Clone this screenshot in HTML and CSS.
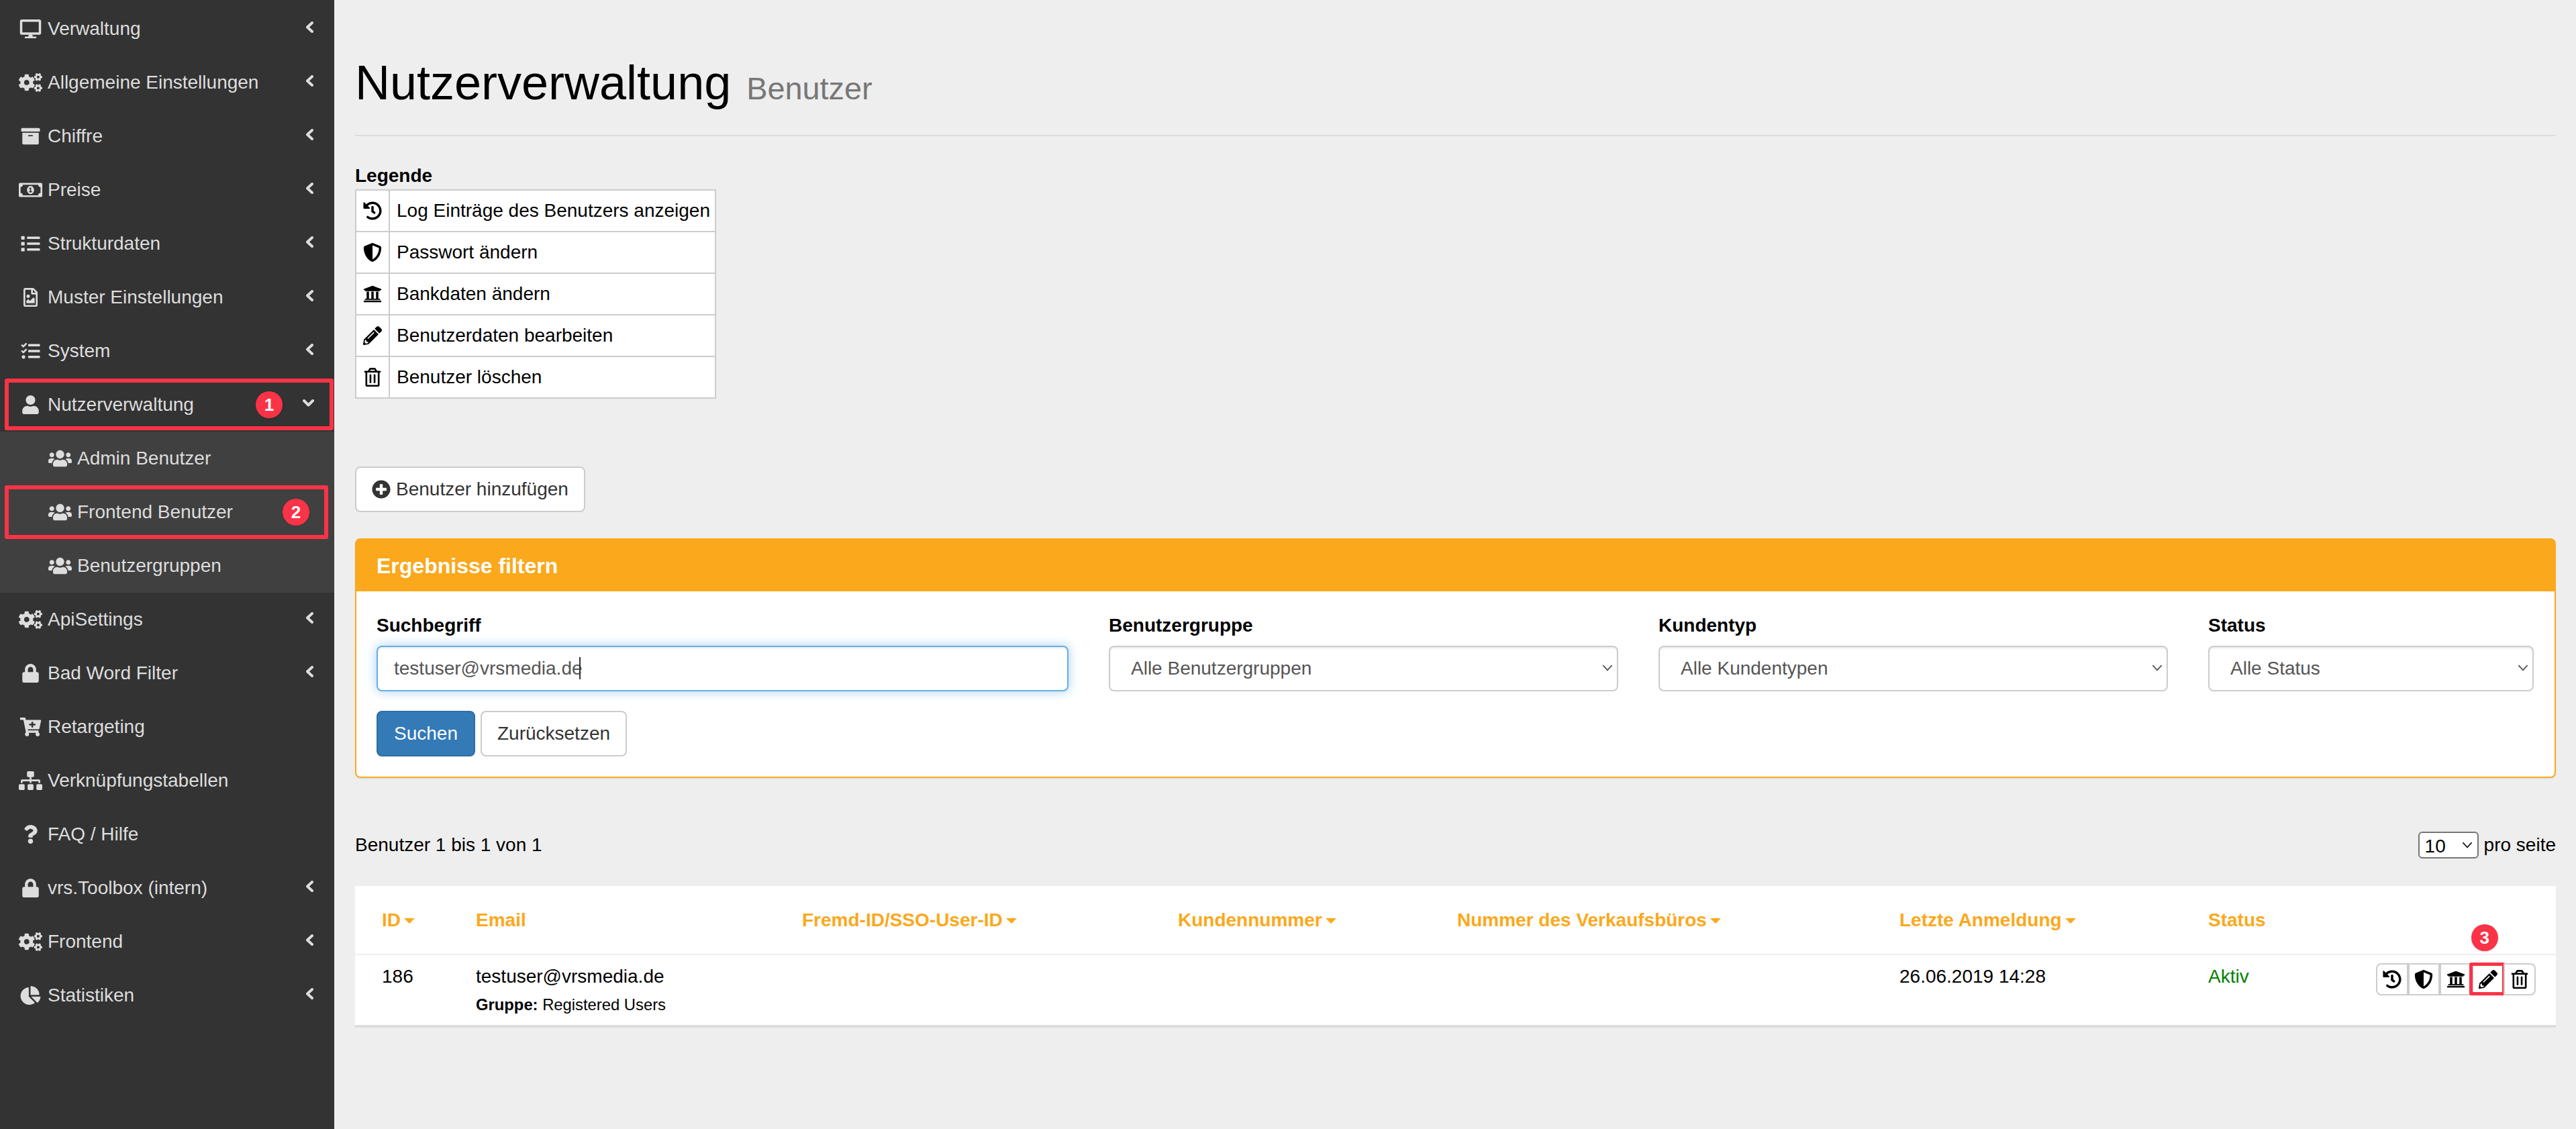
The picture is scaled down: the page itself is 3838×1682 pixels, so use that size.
FILE: index.html
```html
<!DOCTYPE html>
<html lang="de">
  <head>
    <meta charset="UTF-8" />
    <title>Nutzerverwaltung</title>
    <link rel="stylesheet" href="styles.css">
  </head>
  <body>
    <svg class="sprite" aria-hidden="true">
      <defs>
        <path id="desktop" d="M528 0H48C21.5 0 0 21.5 0 48v320c0 26.5 21.5 48 48 48h192l-16 48h-72c-13.3 0-24 10.7-24 24s10.7 24 24 24h272c13.3 0 24-10.7 24-24s-10.7-24-24-24h-72l-16-48h192c26.5 0 48-21.5 48-48V48c0-26.5-21.5-48-48-48zm-16 352H64V64h448v288z"/>
        <path id="cogs" d="M512.1 191l-8.2 14.3c-3 5.3-9.4 7.5-15.1 5.4-11.8-4.4-22.6-10.7-32.1-18.6-4.6-3.8-5.8-10.5-2.8-15.7l8.2-14.3c-6.9-8-12.3-17.3-15.9-27.4h-16.5c-6 0-11.2-4.3-12.2-10.3-2-12-2.1-24.6 0-37.1 1-6 6.2-10.4 12.2-10.4h16.5c3.6-10.1 9-19.4 15.9-27.4l-8.2-14.3c-3-5.2-1.9-11.9 2.8-15.7 9.5-7.9 20.4-14.2 32.1-18.6 5.7-2.1 12.1.1 15.1 5.4l8.2 14.3c10.5-1.9 21.2-1.9 31.7 0L552 6.3c3-5.3 9.4-7.5 15.1-5.4 11.8 4.4 22.6 10.7 32.1 18.6 4.6 3.8 5.8 10.5 2.8 15.7l-8.2 14.3c6.9 8 12.3 17.3 15.9 27.4h16.5c6 0 11.2 4.3 12.2 10.3 2 12 2.1 24.6 0 37.1-1 6-6.2 10.4-12.2 10.4h-16.5c-3.6 10.1-9 19.4-15.9 27.4l8.2 14.3c3 5.2 1.9 11.9-2.8 15.7-9.5 7.9-20.4 14.2-32.1 18.6-5.7 2.1-12.1-.1-15.1-5.4l-8.2-14.3c-10.4 1.9-21.2 1.9-31.7 0zm-10.5-58.8c38.5 29.6 82.4-14.3 52.8-52.8-38.5-29.7-82.4 14.3-52.8 52.8zM386.3 286.1l33.7 16.8c10.1 5.8 14.5 18.1 10.5 29.1-8.9 24.2-26.4 46.4-42.6 65.8-7.4 8.9-20.2 11.1-30.3 5.3l-29.1-16.8c-16 13.7-34.6 24.6-54.9 31.7v33.6c0 11.6-8.3 21.6-19.7 23.6-24.6 4.2-50.4 4.4-75.9 0-11.5-2-20-11.9-20-23.6V418c-20.3-7.2-38.9-18-54.9-31.7L74 403c-10 5.8-22.9 3.6-30.3-5.3-16.2-19.4-33.3-41.6-42.2-65.7-4-10.9.4-23.2 10.5-29.1l33.3-16.8c-3.9-20.9-3.9-42.4 0-63.4L12 205.8c-10.1-5.8-14.6-18.1-10.5-29 8.9-24.2 26-46.4 42.2-65.8 7.4-8.9 20.2-11.1 30.3-5.3l29.1 16.8c16-13.7 34.6-24.6 54.9-31.7V57.1c0-11.5 8.2-21.5 19.6-23.5 24.6-4.2 50.5-4.4 76-.1 11.5 2 20 11.9 20 23.6v33.6c20.3 7.2 38.9 18 54.9 31.7l29.1-16.8c10-5.8 22.9-3.6 30.3 5.3 16.2 19.4 33.2 41.6 42.1 65.8 4 10.9.1 23.2-10 29.1l-33.7 16.8c3.9 21 3.9 42.5 0 63.5zm-117.6 21.1c59.2-77-28.7-164.9-105.7-105.7-59.2 77 28.7 164.9 105.7 105.7zm243.4 182.7l-8.2 14.3c-3 5.3-9.4 7.5-15.1 5.4-11.8-4.4-22.6-10.7-32.1-18.6-4.6-3.8-5.8-10.5-2.8-15.7l8.2-14.3c-6.9-8-12.3-17.3-15.9-27.4h-16.5c-6 0-11.2-4.3-12.2-10.3-2-12-2.1-24.6 0-37.1 1-6 6.2-10.4 12.2-10.4h16.5c3.6-10.1 9-19.4 15.9-27.4l-8.2-14.3c-3-5.2-1.9-11.9 2.8-15.7 9.5-7.9 20.4-14.2 32.1-18.6 5.7-2.1 12.1.1 15.1 5.4l8.2 14.3c10.5-1.9 21.2-1.9 31.7 0l8.2-14.3c3-5.3 9.4-7.5 15.1-5.4 11.8 4.4 22.6 10.7 32.1 18.6 4.6 3.8 5.8 10.5 2.8 15.7l-8.2 14.3c6.9 8 12.3 17.3 15.9 27.4h16.5c6 0 11.2 4.3 12.2 10.3 2 12 2.1 24.6 0 37.1-1 6-6.2 10.4-12.2 10.4h-16.5c-3.6 10.1-9 19.4-15.9 27.4l8.2 14.3c3 5.2 1.9 11.9-2.8 15.7-9.5 7.9-20.4 14.2-32.1 18.6-5.7 2.1-12.1-.1-15.1-5.4l-8.2-14.3c-10.4 1.9-21.2 1.9-31.7 0zM501.6 431c38.5 29.6 82.4-14.3 52.8-52.8-38.5-29.6-82.4 14.3-52.8 52.8z"/>
        <path id="archive" d="M32 448c0 17.7 14.3 32 32 32h384c17.7 0 32-14.3 32-32V160H32v288zm160-212c0-6.6 5.4-12 12-12h104c6.6 0 12 5.4 12 12v8c0 6.6-5.4 12-12 12H204c-6.6 0-12-5.4-12-12v-8zM480 32H32C14.3 32 0 46.3 0 64v48c0 8.8 7.2 16 16 16h480c8.8 0 16-7.2 16-16V64c0-17.7-14.3-32-32-32z"/>
        <path id="money" d="M320 144c-53.02 0-96 50.14-96 112 0 61.85 42.98 112 96 112 53 0 96-50.13 96-112 0-61.86-42.98-112-96-112zm40 168c0 4.42-3.58 8-8 8h-64c-4.42 0-8-3.58-8-8v-16c0-4.42 3.58-8 8-8h16v-55.44l-.47.31a7.992 7.992 0 0 1-11.09-2.22l-8.88-13.31a7.992 7.992 0 0 1 2.22-11.09l15.33-10.22a23.99 23.99 0 0 1 13.31-4.03H328c4.42 0 8 3.58 8 8V288h16c4.42 0 8 3.58 8 8v16zM608 64H32C14.33 64 0 78.33 0 96v320c0 17.67 14.33 32 32 32h576c17.67 0 32-14.33 32-32V96c0-17.67-14.33-32-32-32zm-16 272c-35.35 0-64 28.65-64 64H112c0-35.35-28.65-64-64-64V176c35.35 0 64-28.65 64-64h416c0 35.35 28.65 64 64 64v160z"/>
        <path id="list" d="M80 368H16a16 16 0 0 0-16 16v64a16 16 0 0 0 16 16h64a16 16 0 0 0 16-16v-64a16 16 0 0 0-16-16zm0-320H16A16 16 0 0 0 0 64v64a16 16 0 0 0 16 16h64a16 16 0 0 0 16-16V64a16 16 0 0 0-16-16zm0 160H16a16 16 0 0 0-16 16v64a16 16 0 0 0 16 16h64a16 16 0 0 0 16-16v-64a16 16 0 0 0-16-16zm416 176H176a16 16 0 0 0-16 16v32a16 16 0 0 0 16 16h320a16 16 0 0 0 16-16v-32a16 16 0 0 0-16-16zm0-320H176a16 16 0 0 0-16 16v32a16 16 0 0 0 16 16h320a16 16 0 0 0 16-16V80a16 16 0 0 0-16-16zm0 160H176a16 16 0 0 0-16 16v32a16 16 0 0 0 16 16h320a16 16 0 0 0 16-16v-32a16 16 0 0 0-16-16z"/>
        <path id="file-image" d="M369.9 97.9L286 14C277 5 264.8-.1 252.1-.1H48C21.5 0 0 21.5 0 48v416c0 26.5 21.5 48 48 48h288c26.5 0 48-21.5 48-48V131.9c0-12.7-5.1-25-14.1-34zM332.1 128H256V51.9l76.1 76.1zM48 464V48h160v104c0 13.3 10.7 24 24 24h104v288H48zm32-48h224V288l-23.5-23.5c-4.7-4.7-12.3-4.7-17 0L176 352l-39.5-39.5c-4.7-4.7-12.3-4.7-17 0L80 352v64zm48-240c-26.5 0-48 21.5-48 48s21.5 48 48 48 48-21.5 48-48-21.5-48-48-48z"/>
        <path id="tasks" d="M139.61 35.5a12 12 0 0 0-17 0L58.93 98.81l-22.7-22.12a12 12 0 0 0-17 0L3.53 92.41a12 12 0 0 0 0 17l47.59 47.4a12.78 12.78 0 0 0 17.61 0l15.59-15.62L156.52 69a12.09 12.09 0 0 0 .09-17zm0 159.19a12 12 0 0 0-17 0l-63.68 63.72-22.7-22.1a12 12 0 0 0-17 0L3.53 252a12 12 0 0 0 0 17L51 316.5a12.77 12.77 0 0 0 17.6 0l15.7-15.69 72.2-72.22a12 12 0 0 0 .09-16.9zM64 368c-26.49 0-48.59 21.5-48.59 48S37.53 464 64 464a48 48 0 0 0 0-96zm432 16H208a16 16 0 0 0-16 16v32a16 16 0 0 0 16 16h288a16 16 0 0 0 16-16v-32a16 16 0 0 0-16-16zm0-320H208a16 16 0 0 0-16 16v32a16 16 0 0 0 16 16h288a16 16 0 0 0 16-16V80a16 16 0 0 0-16-16zm0 160H208a16 16 0 0 0-16 16v32a16 16 0 0 0 16 16h288a16 16 0 0 0 16-16v-32a16 16 0 0 0-16-16z"/>
        <path id="user" d="M224 256c70.7 0 128-57.3 128-128S294.7 0 224 0 96 57.3 96 128s57.3 128 128 128zm89.6 32h-16.7c-22.2 10.2-46.9 16-72.9 16s-50.6-5.8-72.9-16h-16.7C60.2 288 0 348.2 0 422.4V464c0 26.5 21.5 48 48 48h352c26.5 0 48-21.5 48-48v-41.6c0-74.2-60.2-134.4-134.4-134.4z"/>
        <path id="users" d="M96 224c35.3 0 64-28.7 64-64s-28.7-64-64-64-64 28.7-64 64 28.7 64 64 64zm448 0c35.3 0 64-28.7 64-64s-28.7-64-64-64-64 28.7-64 64 28.7 64 64 64zm32 32h-64c-17.6 0-33.5 7.1-45.1 18.6 40.3 22.1 68.9 62 75.1 109.4h66c17.7 0 32-14.3 32-32v-32c0-35.3-28.7-64-64-64zm-256 0c61.9 0 112-50.1 112-112S381.9 32 320 32 208 82.1 208 144s50.1 112 112 112zm76.8 32h-8.3c-20.8 10-43.9 16-68.5 16s-47.6-6-68.5-16h-8.3C179.6 288 128 339.6 128 403.2V432c0 26.5 21.5 48 48 48h288c26.5 0 48-21.5 48-48v-28.8c0-63.6-51.6-115.2-115.2-115.2zm-223.7-13.4C161.5 263.1 145.6 256 128 256H64c-35.3 0-64 28.7-64 64v32c0 17.7 14.3 32 32 32h65.9c6.3-47.4 34.9-87.3 75.2-109.4z"/>
        <path id="lock" d="M400 224h-24v-72C376 68.2 307.8 0 224 0S72 68.2 72 152v72H48c-26.5 0-48 21.5-48 48v192c0 26.5 21.5 48 48 48h352c26.5 0 48-21.5 48-48V272c0-26.5-21.5-48-48-48zm-104 0H152v-72c0-39.7 32.3-72 72-72s72 32.3 72 72v72z"/>
        <path id="cart-plus" d="M504.717 320H211.572l6.545 32h268.418c15.401 0 26.816 14.301 23.403 29.319l-5.517 24.276C523.112 414.668 536 433.828 536 456c0 31.202-25.519 56.444-56.824 55.994-29.823-.429-54.35-24.631-55.155-54.447-.44-16.287 6.085-31.049 16.803-41.548H231.176C241.553 426.165 248 440.326 248 456c0 31.813-26.528 57.431-58.67 55.938-28.54-1.325-51.751-24.385-53.251-52.917-1.158-22.034 10.436-41.455 28.051-51.586L93.883 64H24C10.745 64 0 53.255 0 40V24C0 10.745 10.745 0 24 0h102.529c11.401 0 21.228 8.021 23.513 19.19L159.208 64H551.99c15.401 0 26.816 14.301 23.403 29.319l-47.273 208C525.637 312.246 515.923 320 504.717 320zM408 168h-48v-40c0-8.837-7.163-16-16-16h-16c-8.837 0-16 7.163-16 16v40h-48c-8.837 0-16 7.163-16 16v16c0 8.837 7.163 16 16 16h48v40c0 8.837 7.163 16 16 16h16c8.837 0 16-7.163 16-16v-40h48c8.837 0 16-7.163 16-16v-16c0-8.837-7.163-16-16-16z"/>
        <path id="sitemap" d="M128 352H32c-17.67 0-32 14.33-32 32v96c0 17.67 14.33 32 32 32h96c17.67 0 32-14.33 32-32v-96c0-17.67-14.33-32-32-32zm-24-80h192v48h48v-48h192v48h48v-57.59c0-21.17-17.23-38.41-38.41-38.41H344v-64h40c17.67 0 32-14.33 32-32V32c0-17.67-14.33-32-32-32H256c-17.67 0-32 14.33-32 32v96c0 17.67 14.33 32 32 32h40v64H94.41C73.23 224 56 241.23 56 262.41V320h48v-48zm264 80h-96c-17.67 0-32 14.33-32 32v96c0 17.67 14.33 32 32 32h96c17.67 0 32-14.33 32-32v-96c0-17.67-14.33-32-32-32zm240 0h-96c-17.67 0-32 14.33-32 32v96c0 17.67 14.33 32 32 32h96c17.67 0 32-14.33 32-32v-96c0-17.67-14.33-32-32-32z"/>
        <path id="question" d="M202.021 0C122.202 0 70.503 32.703 29.914 91.026c-7.363 10.58-5.093 25.086 5.178 32.874l43.138 32.709c10.373 7.865 25.132 6.026 33.253-4.148 25.049-31.381 43.63-49.449 82.757-49.449 30.764 0 68.816 19.799 68.816 49.631 0 22.552-18.617 34.134-48.993 51.164-35.423 19.86-82.299 44.576-82.299 106.405V320c0 13.255 10.745 24 24 24h72.471c13.255 0 24-10.745 24-24v-5.773c0-42.86 125.268-44.645 125.268-160.627C377.504 66.256 286.902 0 202.021 0zM192 373.459c-38.196 0-69.271 31.075-69.271 69.271 0 38.195 31.075 69.27 69.271 69.27s69.271-31.075 69.271-69.271-31.075-69.27-69.271-69.27z"/>
        <path id="chart-pie" d="M527.79 288H290.5l158.03 158.03c6.04 6.04 15.98 6.53 22.19.68 38.7-36.46 65.32-85.61 73.13-140.86 1.34-9.46-6.51-17.85-16.06-17.85zm-15.83-64.8C503.72 103.74 408.26 8.28 288.8.04 279.68-.59 272 7.1 272 16.24V240h223.77c9.14 0 16.82-7.68 16.19-16.8zM224 288V50.71c0-9.55-8.39-17.4-17.84-16.06C86.99 51.49-4.1 155.6.14 280.37 4.5 408.51 114.83 513.59 243.03 511.98c50.4-.63 96.97-16.87 135.26-44.03 7.9-5.6 8.42-17.23 1.57-24.08L224 288z"/>
        <path id="history" d="M504 255.531c.253 136.64-111.18 248.372-247.82 248.468-59.015.042-113.223-20.53-155.822-54.911-11.077-8.94-11.905-25.541-1.839-35.607l11.267-11.267c8.609-8.609 22.353-9.551 31.891-1.984C173.062 425.135 212.781 440 256 440c101.705 0 184-82.311 184-184 0-101.705-82.311-184-184-184-48.814 0-93.149 18.969-126.068 49.932l50.754 50.754c10.08 10.08 2.941 27.314-11.313 27.314H24c-8.837 0-16-7.163-16-16V38.627c0-14.254 17.234-21.393 27.314-11.314l49.372 49.372C129.209 34.136 189.552 8 256 8c136.81 0 247.747 110.78 248 247.531zm-180.912 78.784l9.823-12.63c8.138-10.463 6.253-25.542-4.21-33.679L288 256.349V152c0-13.255-10.745-24-24-24h-16c-13.255 0-24 10.745-24 24v135.651l65.409 50.874c10.463 8.137 25.541 6.253 33.679-4.21z"/>
        <path id="shield" d="M466.5 83.7l-192-80a48.15 48.15 0 0 0-36.9 0l-192 80C27.7 91.1 16 108.6 16 128c0 198.5 114.5 335.7 221.5 380.3 11.8 4.9 25.1 4.9 36.9 0C360.1 472.6 496 349.3 496 128c0-19.4-11.7-36.9-29.5-44.3zM256.1 446.3l-.1-381 175.9 73.3c-3.3 151.4-82.1 261.1-175.8 307.7z"/>
        <path id="bank" d="M496 128v16a8 8 0 0 1-8 8h-24v12c0 6.627-5.373 12-12 12H60c-6.627 0-12-5.373-12-12v-12H24a8 8 0 0 1-8-8v-16a8 8 0 0 1 4.941-7.392l232-88a7.996 7.996 0 0 1 6.118 0l232 88A8 8 0 0 1 496 128zm-24 304H40c-13.255 0-24 10.745-24 24v16a8 8 0 0 0 8 8h464a8 8 0 0 0 8-8v-16c0-13.255-10.745-24-24-24zM96 192v192H60c-6.627 0-12 5.373-12 12v20h416v-20c0-6.627-5.373-12-12-12h-36V192h-64v192h-64V192h-64v192h-64V192H96z"/>
        <path id="pencil" d="M497.9 142.1l-46.1 46.1c-4.7 4.7-12.3 4.7-17 0l-111-111c-4.7-4.7-4.7-12.3 0-17l46.1-46.1c18.7-18.7 49.1-18.7 67.9 0l60.1 60.1c18.8 18.7 18.8 49.1 0 67.9zM284.2 99.8L21.6 362.4.4 483.9c-2.9 16.4 11.4 30.6 27.8 27.8l121.5-21.3 262.6-262.6c4.7-4.7 4.7-12.3 0-17l-111-111c-4.8-4.7-12.4-4.7-17.1 0zM124.1 339.9c-5.5-5.5-5.5-14.3 0-19.8l154-154c5.5-5.5 14.3-5.5 19.8 0s5.5 14.3 0 19.8l-154 154c-5.5 5.5-14.3 5.5-19.8 0zM88 424h48v36.3l-64.5 11.3-31.1-31.1L51.7 376H88v48z"/>
        <path id="trash" d="M268 416h24a12 12 0 0 0 12-12V188a12 12 0 0 0-12-12h-24a12 12 0 0 0-12 12v216a12 12 0 0 0 12 12zM432 80h-82.41l-34-56.7A48 48 0 0 0 274.41 0H173.59a48 48 0 0 0-41.16 23.3L98.41 80H16A16 16 0 0 0 0 96v16a16 16 0 0 0 16 16h16v336a48 48 0 0 0 48 48h288a48 48 0 0 0 48-48V128h16a16 16 0 0 0 16-16V96a16 16 0 0 0-16-16zM171.84 50.91A6 6 0 0 1 177 48h94a6 6 0 0 1 5.15 2.91L293.61 80H154.39zM368 464H80V128h288zm-212-48h24a12 12 0 0 0 12-12V188a12 12 0 0 0-12-12h-24a12 12 0 0 0-12 12v216a12 12 0 0 0 12 12z"/>
        <path id="plus-circle" d="M256 8C119 8 8 119 8 256s111 248 248 248 248-111 248-248S393 8 256 8zm144 276c0 6.6-5.4 12-12 12h-92v92c0 6.6-5.4 12-12 12h-56c-6.6 0-12-5.4-12-12v-92h-92c-6.6 0-12-5.4-12-12v-56c0-6.6 5.4-12 12-12h92v-92c0-6.6 5.4-12 12-12h56c6.6 0 12 5.4 12 12v92h92c6.6 0 12 5.4 12 12v56z"/>
        <polyline id="chev-left" points="9,2 2,8.5 9,15" fill="none" stroke="currentColor" stroke-width="4" stroke-linecap="round" stroke-linejoin="round"/>
        <polyline id="chev-down" points="2,2 8.5,8.5 15,2" fill="none" stroke="currentColor" stroke-width="4" stroke-linecap="round" stroke-linejoin="round"/>
        <polyline id="chev-thin" points="1,1 7,7.5 13,1" fill="none" stroke="currentColor" stroke-width="1.6"/>
      </defs>
    </svg>

    <aside class="sidebar">
      <a class="nav-item"><svg class="nav-ico" viewBox="0 0 576 512"><use href="#desktop"/></svg><span>Verwaltung</span><svg class="chev" viewBox="0 0 11 17"><use href="#chev-left"/></svg></a>
      <a class="nav-item"><svg class="nav-ico" viewBox="0 0 640 512"><use href="#cogs"/></svg><span>Allgemeine Einstellungen</span><svg class="chev" viewBox="0 0 11 17"><use href="#chev-left"/></svg></a>
      <a class="nav-item"><svg class="nav-ico" viewBox="0 0 512 512"><use href="#archive"/></svg><span>Chiffre</span><svg class="chev" viewBox="0 0 11 17"><use href="#chev-left"/></svg></a>
      <a class="nav-item"><svg class="nav-ico" viewBox="0 0 640 512"><use href="#money"/></svg><span>Preise</span><svg class="chev" viewBox="0 0 11 17"><use href="#chev-left"/></svg></a>
      <a class="nav-item"><svg class="nav-ico" viewBox="0 0 512 512"><use href="#list"/></svg><span>Strukturdaten</span><svg class="chev" viewBox="0 0 11 17"><use href="#chev-left"/></svg></a>
      <a class="nav-item"><svg class="nav-ico" viewBox="0 0 384 512"><use href="#file-image"/></svg><span>Muster Einstellungen</span><svg class="chev" viewBox="0 0 11 17"><use href="#chev-left"/></svg></a>
      <a class="nav-item"><svg class="nav-ico" viewBox="0 0 512 512"><use href="#tasks"/></svg><span>System</span><svg class="chev" viewBox="0 0 11 17"><use href="#chev-left"/></svg></a>
      <a class="nav-item"><svg class="nav-ico" viewBox="0 0 448 512"><use href="#user"/></svg><span>Nutzerverwaltung</span><svg class="chev chev-open" viewBox="0 0 17 11"><use href="#chev-down"/></svg>
        <span class="mark mark-nutzer"></span><span class="badge badge-nutzer">1</span>
      </a>
      <div class="subnav">
        <a class="nav-item sub-item"><svg class="nav-ico" viewBox="0 0 640 512"><use href="#users"/></svg><span>Admin Benutzer</span></a>
        <a class="nav-item sub-item"><svg class="nav-ico" viewBox="0 0 640 512"><use href="#users"/></svg><span>Frontend Benutzer</span>
          <span class="mark mark-frontend"></span><span class="badge badge-frontend">2</span>
        </a>
        <a class="nav-item sub-item"><svg class="nav-ico" viewBox="0 0 640 512"><use href="#users"/></svg><span>Benutzergruppen</span></a>
      </div>
      <a class="nav-item"><svg class="nav-ico" viewBox="0 0 640 512"><use href="#cogs"/></svg><span>ApiSettings</span><svg class="chev" viewBox="0 0 11 17"><use href="#chev-left"/></svg></a>
      <a class="nav-item"><svg class="nav-ico" viewBox="0 0 448 512"><use href="#lock"/></svg><span>Bad Word Filter</span><svg class="chev" viewBox="0 0 11 17"><use href="#chev-left"/></svg></a>
      <a class="nav-item"><svg class="nav-ico" viewBox="0 0 576 512"><use href="#cart-plus"/></svg><span>Retargeting</span></a>
      <a class="nav-item"><svg class="nav-ico" viewBox="0 0 640 512"><use href="#sitemap"/></svg><span>Verknüpfungstabellen</span></a>
      <a class="nav-item"><svg class="nav-ico" viewBox="0 0 384 512"><use href="#question"/></svg><span>FAQ / Hilfe</span></a>
      <a class="nav-item"><svg class="nav-ico" viewBox="0 0 448 512"><use href="#lock"/></svg><span>vrs.Toolbox (intern)</span><svg class="chev" viewBox="0 0 11 17"><use href="#chev-left"/></svg></a>
      <a class="nav-item"><svg class="nav-ico" viewBox="0 0 640 512"><use href="#cogs"/></svg><span>Frontend</span><svg class="chev" viewBox="0 0 11 17"><use href="#chev-left"/></svg></a>
      <a class="nav-item"><svg class="nav-ico" viewBox="0 0 544 512"><use href="#chart-pie"/></svg><span>Statistiken</span><svg class="chev" viewBox="0 0 11 17"><use href="#chev-left"/></svg></a>
    </aside>

    <main class="content">
      <h1 class="page-title">Nutzerverwaltung <small>Benutzer</small></h1>

      <div class="legend-title">Legende</div>
      <table class="legend">
        <tr><td class="legend-ico"><svg viewBox="0 0 512 512"><use href="#history"/></svg></td><td>Log Einträge des Benutzers anzeigen</td></tr>
        <tr><td class="legend-ico"><svg viewBox="0 0 512 512"><use href="#shield"/></svg></td><td>Passwort ändern</td></tr>
        <tr><td class="legend-ico"><svg viewBox="0 0 512 512"><use href="#bank"/></svg></td><td>Bankdaten ändern</td></tr>
        <tr><td class="legend-ico"><svg viewBox="0 0 512 512"><use href="#pencil"/></svg></td><td>Benutzerdaten bearbeiten</td></tr>
        <tr><td class="legend-ico"><svg viewBox="0 0 448 512"><use href="#trash"/></svg></td><td>Benutzer löschen</td></tr>
      </table>

      <button class="btn btn-add"><svg viewBox="0 0 512 512"><use href="#plus-circle"/></svg>Benutzer hinzufügen</button>

      <section class="panel">
        <div class="panel-head">Ergebnisse filtern</div>
        <div class="panel-body">
          <div class="filters">
            <div>
              <label class="field-label">Suchbegriff</label>
              <div class="field">
                <input class="input input-focus" type="text" value="testuser@vrsmedia.de" />
                <span class="caret"></span>
              </div>
            </div>
            <div>
              <label class="field-label">Benutzergruppe</label>
              <div class="field">
                <select class="input input-select"><option>Alle Benutzergruppen</option></select>
                <svg class="select-arrow" viewBox="0 0 14 9"><use href="#chev-thin"/></svg>
              </div>
            </div>
            <div>
              <label class="field-label">Kundentyp</label>
              <div class="field">
                <select class="input input-select"><option>Alle Kundentypen</option></select>
                <svg class="select-arrow" viewBox="0 0 14 9"><use href="#chev-thin"/></svg>
              </div>
            </div>
            <div>
              <label class="field-label">Status</label>
              <div class="field">
                <select class="input input-select"><option>Alle Status</option></select>
                <svg class="select-arrow" viewBox="0 0 14 9"><use href="#chev-thin"/></svg>
              </div>
            </div>
          </div>
          <div class="panel-actions">
            <button class="btn btn-primary">Suchen</button>
            <button class="btn">Zurücksetzen</button>
          </div>
        </div>
      </section>

      <div class="list-bar">
        <span>Benutzer 1 bis 1 von 1</span>
        <div class="per-page">
          <div class="field">
            <select class="per-select"><option>10</option></select>
            <svg class="per-arrow" viewBox="0 0 14 9"><use href="#chev-thin"/></svg>
          </div>
          <span>pro seite</span>
        </div>
      </div>

      <table class="users">
        <colgroup>
          <col class="c-id"><col class="c-email"><col class="c-fremd"><col class="c-kunde"><col class="c-buero"><col class="c-login"><col class="c-status"><col class="c-actions">
        </colgroup>
        <thead>
          <tr>
            <th>ID<i class="sort"></i></th>
            <th>Email</th>
            <th>Fremd-ID/SSO-User-ID<i class="sort"></i></th>
            <th>Kundennummer<i class="sort"></i></th>
            <th>Nummer des Verkaufsbüros<i class="sort"></i></th>
            <th>Letzte Anmeldung<i class="sort"></i></th>
            <th>Status</th>
            <th></th>
          </tr>
        </thead>
        <tbody>
          <tr>
            <td>186</td>
            <td>testuser@vrsmedia.de<div class="group"><b>Gruppe:</b> Registered Users</div></td>
            <td></td>
            <td></td>
            <td></td>
            <td>26.06.2019 14:28</td>
            <td class="active">Aktiv</td>
            <td>
              <div class="actions">
                <button class="act"><svg viewBox="0 0 512 512"><use href="#history"/></svg></button>
                <button class="act"><svg viewBox="0 0 512 512"><use href="#shield"/></svg></button>
                <button class="act"><svg viewBox="0 0 512 512"><use href="#bank"/></svg></button>
                <button class="act"><svg viewBox="0 0 512 512"><use href="#pencil"/></svg>
                  <span class="mark mark-edit"></span><span class="badge badge-edit">3</span>
                </button>
                <button class="act"><svg viewBox="0 0 448 512"><use href="#trash"/></svg></button>
              </div>
            </td>
          </tr>
        </tbody>
      </table>
    </main>
  </body>
</html>
```

FILE: styles.css
```css
* {
  box-sizing: border-box;
}

html,
body {
  margin: 0;
  height: 100%;
}

body {
  display: flex;
  font-family: 'Liberation Sans', Arial, sans-serif;
  font-size: 28px;
  line-height: 40px;
  color: #000;
  background: #eee;
}

.sprite {
  display: none;
}

svg {
  fill: currentColor;
}

/* sidebar */
.sidebar {
  flex: 0 0 498px;
  min-height: 100vh;
  padding-top: 3px;
  background: #333;
  color: #ddd;
}

.nav-item {
  position: relative;
  display: flex;
  align-items: center;
  height: 80px;
  padding-left: 28px;
}

.nav-ico {
  flex: 0 0 35px;
  width: 35px;
  height: 28px;
  margin-right: 8px;
}

.chev {
  position: absolute;
  left: 456px;
  top: 29px;
  width: 11px;
  height: 17px;
}

.chev-open {
  left: 451px;
  top: 32px;
  width: 17px;
  height: 11px;
}

.subnav {
  background: #404040;
}

.sub-item {
  padding-left: 72px;
}

/* red tutorial marks */
.mark {
  position: absolute;
  border: 6px solid #fb3347;
  border-radius: 3px;
}

.mark-nutzer {
  left: 7px;
  right: 1px;
  top: 1px;
  bottom: 2px;
}

.mark-frontend {
  left: 7px;
  right: 9px;
  top: 0;
  bottom: 0;
}

.mark-edit {
  left: -6px;
  right: -5px;
  top: -3px;
  bottom: -2px;
  border-width: 5px;
}

.badge {
  position: absolute;
  width: 40px;
  height: 40px;
  border-radius: 50%;
  background: #fb3347;
  color: #fff;
  font-size: 26px;
  font-weight: 700;
  line-height: 40px;
  text-align: center;
  box-shadow: 0 1px 3px rgba(0, 0, 0, 0.15);
}

.badge-nutzer {
  left: 381px;
  top: 20px;
}

.badge-frontend {
  left: 421px;
  top: 20px;
}

.badge-edit {
  left: -3px;
  top: -60px;
}

/* main column */
.content {
  flex: 1;
  min-width: 0;
  padding: 84px 30px 0 31px;
}

.page-title {
  height: 119px;
  margin: 0 0 39px;
  border-bottom: 2px solid #ddd;
  font-size: 72px;
  font-weight: 400;
  line-height: 79px;
}

.page-title small {
  margin-left: 3px;
  font-size: 46.8px;
  color: #777;
}

.legend-title {
  font-weight: 700;
}

.legend {
  width: 538px;
  border-collapse: collapse;
  background: #fff;
}

.legend td {
  height: 62px;
  padding: 0 0 0 10px;
  border: 2px solid #ccc;
}

.legend .legend-ico {
  width: 50px;
  padding: 0;
  text-align: center;
}

.legend-ico svg {
  display: block;
  width: 28px;
  height: 28px;
  margin: 0 auto;
}

.btn {
  height: 68px;
  padding: 0 23px;
  border: 2px solid #ccc;
  border-radius: 8px;
  background: #fff;
  color: #333;
  font: inherit;
}

.btn-add {
  display: flex;
  align-items: center;
  margin: 101px 0 39px;
}

.btn-add svg {
  width: 28px;
  height: 28px;
  margin-right: 8px;
}

.btn-primary {
  padding: 0 24px;
  border-color: #2e6da4;
  background: #337ab7;
  color: #fff;
}

.panel {
  border: 2px solid #fba81c;
  border-radius: 8px;
  background: #fff;
  box-shadow: 0 2px 2px rgba(0, 0, 0, 0.05);
}

.panel-head {
  height: 77px;
  padding-left: 30px;
  background: #fba81c;
  color: #fff;
  font-size: 32px;
  font-weight: 700;
  line-height: 78px;
}

.panel-body {
  padding: 31px 30px 30px;
}

.filters {
  display: grid;
  grid-template-columns: 1031px 759px 759px 485px;
  column-gap: 60px;
}

.field-label {
  display: block;
  margin-bottom: 10px;
  font-weight: 700;
}

.field {
  position: relative;
}

.input {
  display: block;
  width: 100%;
  height: 68px;
  padding: 0 24px;
  border: 2px solid #ccc;
  border-radius: 8px;
  background: #fff;
  color: #555;
  font: inherit;
  box-shadow: inset 0 2px 2px rgba(0, 0, 0, 0.075);
  appearance: none;
  outline: none;
}

.input-select {
  padding: 0 31px;
}

.input-focus {
  border-color: #66afe9;
  box-shadow: inset 0 2px 2px rgba(0, 0, 0, 0.075), 0 0 16px rgba(102, 175, 233, 0.6);
}

.caret {
  position: absolute;
  left: 302px;
  top: 17px;
  width: 2px;
  height: 33px;
  background: #333;
}

.select-arrow {
  position: absolute;
  right: 8px;
  top: 28px;
  width: 16px;
  height: 10px;
  color: #555;
}

.panel-actions {
  display: flex;
  gap: 8px;
  margin-top: 29px;
}

.list-bar {
  display: flex;
  justify-content: space-between;
  align-items: center;
  height: 42px;
  margin: 79px 0 40px;
}

.per-page {
  display: flex;
  align-items: center;
  gap: 8px;
}

.per-select {
  display: block;
  width: 90px;
  height: 40px;
  padding: 0 0 0 8px;
  border: 2px solid #767676;
  border-radius: 6px;
  background: #fff;
  color: #000;
  font: inherit;
  appearance: none;
}

.per-arrow {
  position: absolute;
  left: 65px;
  top: 15px;
  width: 16px;
  height: 10px;
  color: #222;
}

/* user table */
.users {
  width: 3279px;
  table-layout: fixed;
  border-collapse: collapse;
  background: #fff;
  border-bottom: 4px solid #ddd;
}

.c-id { width: 140px; }
.c-email { width: 486px; }
.c-fremd { width: 560px; }
.c-kunde { width: 416px; }
.c-buero { width: 659px; }
.c-login { width: 460px; }
.c-status { width: 250px; }
.c-actions { width: 308px; }

.users th {
  height: 102px;
  padding: 0 0 0 40px;
  border-bottom: 2px solid #eee;
  color: #fba81c;
  font-weight: 700;
  text-align: left;
  white-space: nowrap;
}

.users td {
  height: 107px;
  padding: 12px 0 0 40px;
  vertical-align: top;
}

.sort {
  display: inline-block;
  margin-left: 5px;
  border-top: 8px solid #fba81c;
  border-left: 8px solid transparent;
  border-right: 8px solid transparent;
  vertical-align: middle;
}

.group {
  font-size: 23.8px;
  line-height: 44px;
}

.active {
  color: #008000;
}

.actions {
  display: flex;
  justify-content: flex-end;
  margin-right: 30px;
}

.act {
  position: relative;
  display: flex;
  justify-content: center;
  align-items: center;
  width: 48px;
  height: 48px;
  padding: 0;
  border: 2px solid #ccc;
  background: #fff;
  color: #000;
}

.act:first-child {
  border-radius: 8px 0 0 8px;
}

.act:last-child {
  border-radius: 0 8px 8px 0;
}

.act svg {
  width: 28px;
  height: 28px;
}
```
